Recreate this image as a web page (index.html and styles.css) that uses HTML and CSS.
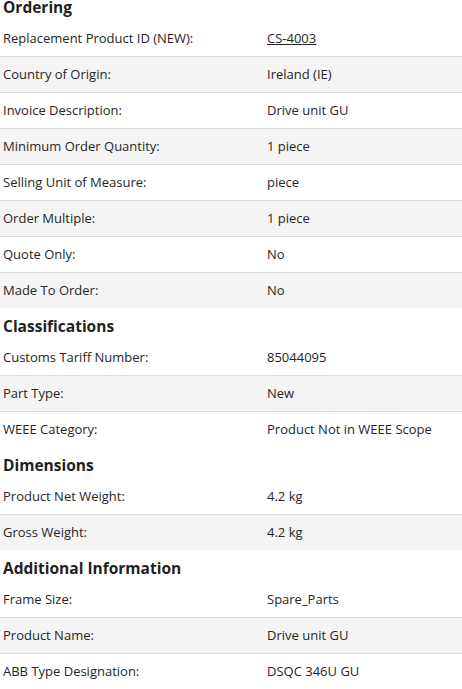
FILE: index.html
```html
<!DOCTYPE html>
<html lang="en">
<head>
<meta charset="utf-8">
<title>Product details</title>
<link rel="stylesheet" href="styles.css">
</head>
<body>
<div class="page">
  <section class="section">
    <h2 class="title">Ordering</h2>
    <div class="rows">
      <div class="row"><div class="label">Replacement Product ID (NEW):</div><div class="value"><a class="link" href="#">CS-4003</a></div></div>
      <div class="row"><div class="label">Country of Origin:</div><div class="value">Ireland (IE)</div></div>
      <div class="row"><div class="label">Invoice Description:</div><div class="value">Drive unit GU</div></div>
      <div class="row"><div class="label">Minimum Order Quantity:</div><div class="value">1 piece</div></div>
      <div class="row"><div class="label">Selling Unit of Measure:</div><div class="value">piece</div></div>
      <div class="row"><div class="label">Order Multiple:</div><div class="value">1 piece</div></div>
      <div class="row"><div class="label">Quote Only:</div><div class="value">No</div></div>
      <div class="row"><div class="label">Made To Order:</div><div class="value">No</div></div>
    </div>
  </section>
  <section class="section">
    <h2 class="title">Classifications</h2>
    <div class="rows">
      <div class="row"><div class="label">Customs Tariff Number:</div><div class="value">85044095</div></div>
      <div class="row"><div class="label">Part Type:</div><div class="value">New</div></div>
      <div class="row"><div class="label">WEEE Category:</div><div class="value">Product Not in WEEE Scope</div></div>
    </div>
  </section>
  <section class="section">
    <h2 class="title">Dimensions</h2>
    <div class="rows">
      <div class="row"><div class="label">Product Net Weight:</div><div class="value">4.2 kg</div></div>
      <div class="row"><div class="label">Gross Weight:</div><div class="value">4.2 kg</div></div>
    </div>
  </section>
  <section class="section">
    <h2 class="title">Additional Information</h2>
    <div class="rows">
      <div class="row"><div class="label">Frame Size:</div><div class="value">Spare_Parts</div></div>
      <div class="row"><div class="label">Product Name:</div><div class="value">Drive unit GU</div></div>
      <div class="row"><div class="label">ABB Type Designation:</div><div class="value">DSQC 346U GU</div></div>
    </div>
  </section>
</div>
</body>
</html>
```
FILE: styles.css
```css
html, body {
  margin: 0;
  padding: 0;
  background: #ffffff;
}
body {
  font-family: "Open Sans", "Noto Sans", sans-serif;
  font-size: 13px;
  color: #262626;
}
.page {
  display: flex;
  flex-direction: column;
  gap: 11px;
}
.section {
  display: flex;
  flex-direction: column;
  gap: 6px;
}
.title {
  margin: 0;
  padding: 0 3px;
  font-size: 15.5px;
  font-weight: 700;
  line-height: 15px;
  color: #1f1f1f;
}
.rows {
  display: flex;
  flex-direction: column;
}
.row {
  box-sizing: border-box;
  display: grid;
  grid-template-columns: 264px 1fr;
  align-items: center;
  height: 35px;
  padding: 0 0 2px 3px;
}
.row + .row {
  height: 36px;
  border-top: 1px solid #dcdcdc;
}
.row:nth-child(even) {
  background: #f5f5f5;
}
.link {
  color: #262626;
  text-decoration: underline;
}
```
